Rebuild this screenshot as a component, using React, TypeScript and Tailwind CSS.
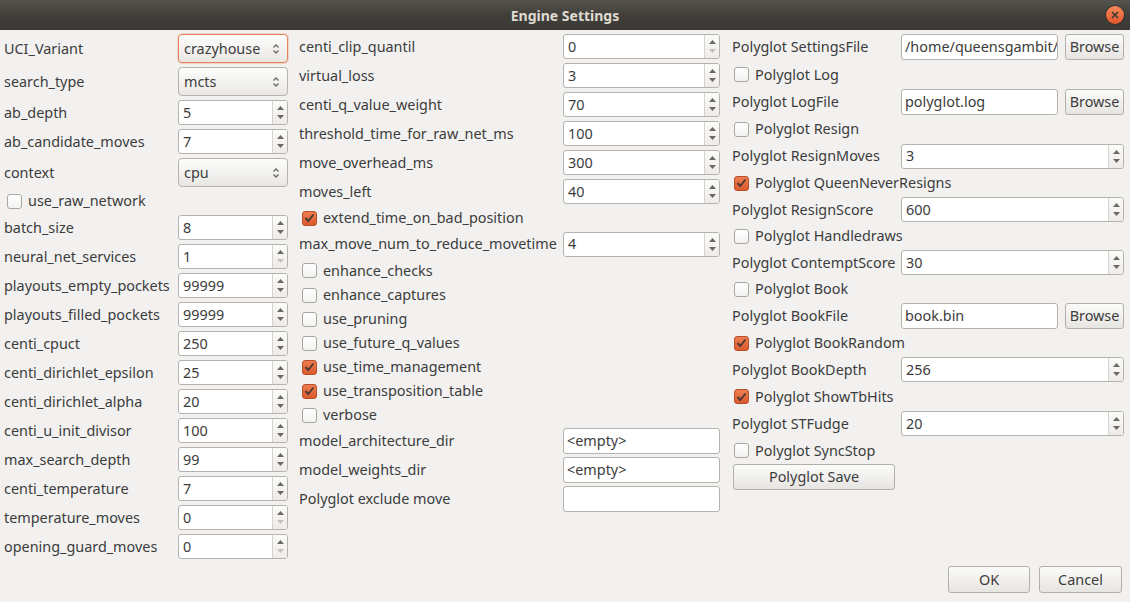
import React from "react";

const font = { fontFamily: '"Noto Sans", "DejaVu Sans", sans-serif' };

type Row =
    | { t: "spin"; label: string; v: string; h: string; lowDisabled?: boolean }
    | { t: "combo"; label: string; v: string; h: string; focus?: boolean }
    | { t: "edit"; label: string; v: string; h: string; browse?: boolean }
    | { t: "check"; label: string; on?: boolean; h: string };

const leftRows: Row[] = [
    { t: "combo", label: "UCI_Variant", v: "crazyhouse", h: "h-[33px]", focus: true },
    { t: "combo", label: "search_type", v: "mcts", h: "h-[33px]" },
    { t: "spin", label: "ab_depth", v: "5", h: "h-[29px]" },
    { t: "spin", label: "ab_candidate_moves", v: "7", h: "h-[29px]" },
    { t: "combo", label: "context", v: "cpu", h: "h-[33px]" },
    { t: "check", label: "use_raw_network", h: "h-[24px]" },
    { t: "spin", label: "batch_size", v: "8", h: "h-[29px]" },
    { t: "spin", label: "neural_net_services", v: "1", h: "h-[29px]", lowDisabled: true },
    { t: "spin", label: "playouts_empty_pockets", v: "99999", h: "h-[29px]" },
    { t: "spin", label: "playouts_filled_pockets", v: "99999", h: "h-[29px]" },
    { t: "spin", label: "centi_cpuct", v: "250", h: "h-[29px]" },
    { t: "spin", label: "centi_dirichlet_epsilon", v: "25", h: "h-[29px]" },
    { t: "spin", label: "centi_dirichlet_alpha", v: "20", h: "h-[29px]" },
    { t: "spin", label: "centi_u_init_divisor", v: "100", h: "h-[29px]" },
    { t: "spin", label: "max_search_depth", v: "99", h: "h-[29px]" },
    { t: "spin", label: "centi_temperature", v: "7", h: "h-[29px]" },
    { t: "spin", label: "temperature_moves", v: "0", h: "h-[29px]", lowDisabled: true },
    { t: "spin", label: "opening_guard_moves", v: "0", h: "h-[29px]", lowDisabled: true },
];

const midRows: Row[] = [
    { t: "spin", label: "centi_clip_quantil", v: "0", h: "h-[29px]", lowDisabled: true },
    { t: "spin", label: "virtual_loss", v: "3", h: "h-[29px]" },
    { t: "spin", label: "centi_q_value_weight", v: "70", h: "h-[29px]" },
    { t: "spin", label: "threshold_time_for_raw_net_ms", v: "100", h: "h-[29px]" },
    { t: "spin", label: "move_overhead_ms", v: "300", h: "h-[29px]" },
    { t: "spin", label: "moves_left", v: "40", h: "h-[29px]" },
    { t: "check", label: "extend_time_on_bad_position", on: true, h: "h-[24px]" },
    { t: "spin", label: "max_move_num_to_reduce_movetime", v: "4", h: "h-[28px]" },
    { t: "check", label: "enhance_checks", h: "h-[25px]" },
    { t: "check", label: "enhance_captures", h: "h-[24px]" },
    { t: "check", label: "use_pruning", h: "h-[24px]" },
    { t: "check", label: "use_future_q_values", h: "h-[24px]" },
    { t: "check", label: "use_time_management", on: true, h: "h-[24px]" },
    { t: "check", label: "use_transposition_table", on: true, h: "h-[24px]" },
    { t: "check", label: "verbose", h: "h-[24px]" },
    { t: "edit", label: "model_architecture_dir", v: "<empty>", h: "h-[28px]" },
    { t: "edit", label: "model_weights_dir", v: "<empty>", h: "h-[29px]" },
    { t: "edit", label: "Polyglot exclude move", v: "", h: "h-[29px]" },
];

const rightRows: Row[] = [
    { t: "edit", label: "Polyglot SettingsFile", v: "/home/queensgambit/", h: "h-[28px]", browse: true },
    { t: "check", label: "Polyglot Log", h: "h-[27px]" },
    { t: "edit", label: "Polyglot LogFile", v: "polyglot.log", h: "h-[28px]", browse: true },
    { t: "check", label: "Polyglot Resign", h: "h-[26px]" },
    { t: "spin", label: "Polyglot ResignMoves", v: "3", h: "h-[28px]" },
    { t: "check", label: "Polyglot QueenNeverResigns", on: true, h: "h-[26px]" },
    { t: "spin", label: "Polyglot ResignScore", v: "600", h: "h-[27px]" },
    { t: "check", label: "Polyglot Handledraws", h: "h-[26px]" },
    { t: "spin", label: "Polyglot ContemptScore", v: "30", h: "h-[27px]" },
    { t: "check", label: "Polyglot Book", h: "h-[26px]" },
    { t: "edit", label: "Polyglot BookFile", v: "book.bin", h: "h-[28px]", browse: true },
    { t: "check", label: "Polyglot BookRandom", on: true, h: "h-[26px]" },
    { t: "spin", label: "Polyglot BookDepth", v: "256", h: "h-[27px]" },
    { t: "check", label: "Polyglot ShowTbHits", on: true, h: "h-[27px]" },
    { t: "spin", label: "Polyglot STFudge", v: "20", h: "h-[27px]" },
    { t: "check", label: "Polyglot SyncStop", h: "h-[27px]" },
];

function Arrow({ up, dim }: { up?: boolean; dim?: boolean }) {
    return (
        <svg width="7" height="4" viewBox="0 0 7 4">
            <path d={up ? "M0 4 L3.5 0 L7 4 Z" : "M0 0 L3.5 4 L7 0 Z"} fill={dim ? "#c4c1bc" : "#6a6864"} />
        </svg>
    );
}

function SpinBox({ value, lowDisabled }: { value: string; lowDisabled?: boolean }) {
    return (
        <div className="flex h-[25px] w-full rounded-[3px] border border-[#b6b2ad] bg-white overflow-hidden">
            <div className="flex-1 flex items-center pl-[4px] text-[14.4px] text-[#3c3c3c]">{value}</div>
            <div className="w-[15px] flex flex-col items-center justify-center gap-[5px] border-l border-[#d6d3cf] bg-gradient-to-b from-[#fbfbfa] to-[#eeecea]">
                <Arrow up />
                <Arrow dim={lowDisabled} />
            </div>
        </div>
    );
}

function Combo({ value, focus }: { value: string; focus?: boolean }) {
    return (
        <div
            className={
                "flex h-[29px] w-full items-center justify-between rounded-[4px] border bg-gradient-to-b from-[#fdfdfc] to-[#e9e7e4] pl-[5px] pr-[7px] text-[14.4px] text-[#3c3c3c] " +
                (focus ? "border-[#e8825a] shadow-[0_0_0_1px_rgba(233,120,80,0.25)]" : "border-[#b6b2ad]")
            }
        >
            <span>{value}</span>
            <svg width="8" height="12" viewBox="0 0 8 12">
                <path d="M1.5 4.5 L4 2 L6.5 4.5" stroke="#6a6864" strokeWidth="1.3" fill="none" />
                <path d="M1.5 7.5 L4 10 L6.5 7.5" stroke="#6a6864" strokeWidth="1.3" fill="none" />
            </svg>
        </div>
    );
}

function Edit({ value }: { value: string }) {
    return (
        <div className="flex h-[26px] w-full items-center overflow-hidden whitespace-nowrap rounded-[3px] border border-[#b6b2ad] bg-white pl-[3px] text-[14.4px] text-[#3c3c3c]">
            {value}
        </div>
    );
}

function Btn({ children, className }: { children: React.ReactNode; className: string }) {
    return (
        <div
            className={
                "flex items-center justify-center rounded-[3px] border border-[#b3afa9] bg-gradient-to-b from-[#fbfbfa] to-[#e7e5e2] text-[14.4px] text-[#3c3c3c] " +
                className
            }
        >
            {children}
        </div>
    );
}

function CheckBox({ on }: { on?: boolean }) {
    if (on) {
        return (
            <div className="flex h-[15px] w-[15px] items-center justify-center rounded-[3px] border border-[#b5502a] bg-gradient-to-b from-[#ef7d50] to-[#dc5a2b]">
                <svg width="11" height="10" viewBox="0 0 11 10">
                    <path d="M1.5 5 L4.3 8 L9.5 1.5" stroke="#4b3a35" strokeWidth="2" fill="none" />
                </svg>
            </div>
        );
    }
    return <div className="h-[15px] w-[15px] rounded-[3px] border border-[#a9a6a1] bg-gradient-to-b from-white to-[#f3f2f1]" />;
}

function Column({ rows, labelW, widgetW, checkPad }: { rows: Row[]; labelW: string; widgetW: string; checkPad: string }) {
    return (
        <div className="flex flex-col">
            {rows.map((r) => {
                if (r.t === "check") {
                    return (
                        <div key={r.label} className={"flex items-center gap-[6px] " + checkPad + " " + r.h}>
                            <CheckBox on={r.on} />
                            <span className="text-[14.4px] text-[#3c3c3c]">{r.label}</span>
                        </div>
                    );
                }
                return (
                    <div key={r.label} className={"flex items-center " + r.h}>
                        <div className={"shrink-0 whitespace-nowrap text-[14.4px] text-[#3c3c3c] " + labelW}>{r.label}</div>
                        <div className={"flex items-center gap-[7px] " + widgetW}>
                            {r.t === "spin" && <SpinBox value={r.v} lowDisabled={r.lowDisabled} />}
                            {r.t === "combo" && <Combo value={r.v} focus={r.focus} />}
                            {r.t === "edit" && (
                                <>
                                    <Edit value={r.v} />
                                    {r.browse && <Btn className="h-[26px] w-[59px] shrink-0">Browse</Btn>}
                                </>
                            )}
                        </div>
                    </div>
                );
            })}
        </div>
    );
}

export default function App() {
    return (
        <div className="flex h-[602px] w-[1130px] flex-col bg-[#f2f1f0]" style={font}>
            <div className="relative flex h-[30px] shrink-0 items-center justify-center bg-gradient-to-b from-[#56544e] via-[#423f3a] to-[#3a3935]">
                <span className="text-[14px] font-bold text-[#dfdbd2]">Engine Settings</span>
                <div className="absolute right-[6px] top-[6px] flex h-[18px] w-[18px] items-center justify-center rounded-full bg-gradient-to-b from-[#f58a5c] to-[#e2542a] shadow-[0_0_0_1px_rgba(0,0,0,0.25)]">
                    <svg width="8" height="8" viewBox="0 0 8 8">
                        <path d="M1 1 L7 7 M7 1 L1 7" stroke="#3a3935" strokeWidth="1.6" />
                    </svg>
                </div>
            </div>

            <div className="flex flex-1 flex-col">
                <div className="flex pl-[4px] pt-[2px]">
                    <div className="w-[284px]">
                        <Column rows={leftRows} labelW="w-[174px]" widgetW="w-[110px]" checkPad="pl-[3px]" />
                    </div>
                    <div className="ml-[11px] w-[421px]">
                        <Column rows={midRows} labelW="w-[264px]" widgetW="w-[157px]" checkPad="pl-[3px]" />
                    </div>
                    <div className="ml-[12px] w-[392px] pt-[1px]">
                        <Column rows={rightRows} labelW="w-[169px]" widgetW="w-[223px]" checkPad="pl-[2px]" />
                        <Btn className="ml-[1px] h-[26px] w-[162px]">Polyglot Save</Btn>
                    </div>
                </div>
                <div className="flex-1" />
                <div className="flex justify-end gap-[9px] pb-[9px] pr-[8px]">
                    <Btn className="h-[27px] w-[82px]">OK</Btn>
                    <Btn className="h-[27px] w-[83px]">Cancel</Btn>
                </div>
            </div>
        </div>
    );
}
